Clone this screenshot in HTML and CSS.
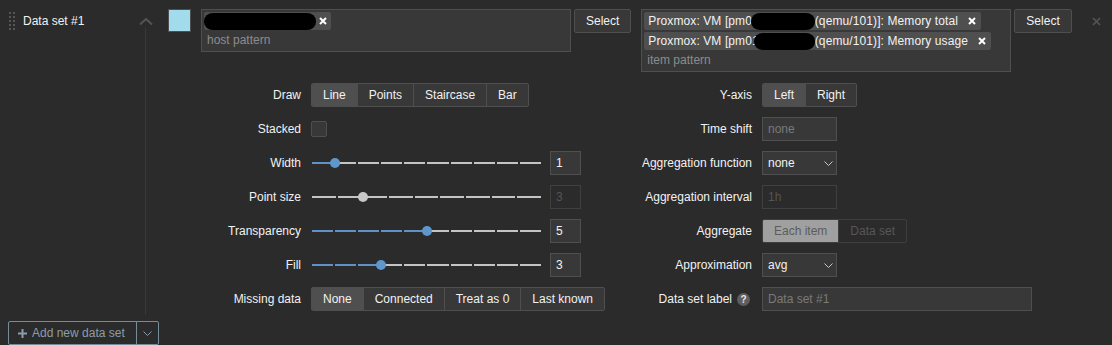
FILE: index.html
```html
<!DOCTYPE html>
<html>
<head>
<meta charset="utf-8">
<link rel="stylesheet" href="styles.css">
</head>
<body>
<div class="ds">
  <div class="ds-head">
    <svg class="handle" width="6" height="18" viewBox="0 0 6 18">
      <g fill="#555">
        <rect x="0" y="0" width="2" height="2"/><rect x="4" y="0" width="2" height="2"/>
        <rect x="0" y="4" width="2" height="2"/><rect x="4" y="4" width="2" height="2"/>
        <rect x="0" y="8" width="2" height="2"/><rect x="4" y="8" width="2" height="2"/>
        <rect x="0" y="12" width="2" height="2"/><rect x="4" y="12" width="2" height="2"/>
        <rect x="0" y="16" width="2" height="2"/><rect x="4" y="16" width="2" height="2"/>
      </g>
    </svg>
    <span class="ds-title">Data set #1</span>
  </div>
  <div class="ds-toggle">
    <svg class="chev-up" width="14" height="8" viewBox="0 0 14 8"><path d="M1 7.5 L7 2 L13 7.5" fill="none" stroke="#555" stroke-width="2"/></svg>
    <span class="vline"></span>
  </div>
  <div class="ds-body">
    <div class="ds-top">
      <span class="swatch"></span>
      <div class="ms">
        <div class="chips">
          <span class="chip chip-host"><span class="redact redact-host"></span><svg class="chip-x" width="8" height="8" viewBox="0 0 8 8"><path d="M1 1 L7 7 M7 1 L1 7" stroke="#fff" stroke-width="2"/></svg></span>
        </div>
        <div class="ms-ph">host pattern</div>
      </div>
      <button class="btn">Select</button>
      <div class="ms">
        <div class="chips">
          <span class="chip"><span class="chip-t">Proxmox: VM [pm01</span><span class="redact redact-1"></span><span class="chip-t">(qemu/101)]: Memory total</span><svg class="chip-x" width="8" height="8" viewBox="0 0 8 8"><path d="M1 1 L7 7 M7 1 L1 7" stroke="#fff" stroke-width="2"/></svg></span>
          <span class="chip"><span class="chip-t">Proxmox: VM [pm01</span><span class="redact redact-2"></span><span class="chip-t">(qemu/101)]: Memory usage</span><svg class="chip-x" width="8" height="8" viewBox="0 0 8 8"><path d="M1 1 L7 7 M7 1 L1 7" stroke="#fff" stroke-width="2"/></svg></span>
        </div>
        <div class="ms-ph">item pattern</div>
      </div>
      <button class="btn">Select</button>
    </div>

    <div class="ds-form">
      <div class="lbl">Draw</div>
      <div class="ctl">
        <div class="seg">
          <span class="seg-i on">Line</span><span class="seg-i">Points</span><span class="seg-i">Staircase</span><span class="seg-i">Bar</span>
        </div>
      </div>
      <div class="lbl">Y-axis</div>
      <div class="ctl">
        <div class="seg">
          <span class="seg-i on">Left</span><span class="seg-i">Right</span>
        </div>
      </div>

      <div class="lbl">Stacked</div>
      <div class="ctl"><span class="checkbox"></span></div>
      <div class="lbl">Time shift</div>
      <div class="ctl"><input class="inp inp-sm" type="text" placeholder="none"></div>

      <div class="lbl">Width</div>
      <div class="ctl slider-row">
        <div class="slider">
          <div class="track">
            <span class="tk on"></span><span class="tk"></span><span class="tk"></span><span class="tk"></span><span class="tk"></span><span class="tk"></span><span class="tk"></span><span class="tk"></span><span class="tk"></span><span class="tk"></span>
          </div>
          <span class="thumb" style="left:10%"></span>
        </div>
        <input class="inp inp-num" type="text" value="1">
      </div>
      <div class="lbl">Aggregation function</div>
      <div class="ctl">
        <div class="select"><span>none</span><svg width="9" height="5" viewBox="0 0 9 5"><path d="M0.5 0.5 L4.5 4.5 L8.5 0.5" fill="none" stroke="#c8c8c8" stroke-width="1"/></svg></div>
      </div>

      <div class="lbl">Point size</div>
      <div class="ctl slider-row">
        <div class="slider disabled">
          <div class="track">
            <span class="tk"></span><span class="tk"></span><span class="tk"></span><span class="tk"></span><span class="tk"></span><span class="tk"></span><span class="tk"></span><span class="tk"></span><span class="tk"></span>
          </div>
          <span class="thumb" style="left:22.22%"></span>
        </div>
        <input class="inp inp-num" type="text" value="3" disabled>
      </div>
      <div class="lbl">Aggregation interval</div>
      <div class="ctl"><input class="inp inp-sm" type="text" value="1h" disabled></div>

      <div class="lbl">Transparency</div>
      <div class="ctl slider-row">
        <div class="slider">
          <div class="track">
            <span class="tk on"></span><span class="tk on"></span><span class="tk on"></span><span class="tk on"></span><span class="tk on"></span><span class="tk"></span><span class="tk"></span><span class="tk"></span><span class="tk"></span><span class="tk"></span>
          </div>
          <span class="thumb" style="left:50%"></span>
        </div>
        <input class="inp inp-num" type="text" value="5">
      </div>
      <div class="lbl">Aggregate</div>
      <div class="ctl">
        <div class="seg seg-dis">
          <span class="seg-i on">Each item</span><span class="seg-i">Data set</span>
        </div>
      </div>

      <div class="lbl">Fill</div>
      <div class="ctl slider-row">
        <div class="slider">
          <div class="track">
            <span class="tk on"></span><span class="tk on"></span><span class="tk on"></span><span class="tk"></span><span class="tk"></span><span class="tk"></span><span class="tk"></span><span class="tk"></span><span class="tk"></span><span class="tk"></span>
          </div>
          <span class="thumb" style="left:30%"></span>
        </div>
        <input class="inp inp-num" type="text" value="3">
      </div>
      <div class="lbl">Approximation</div>
      <div class="ctl">
        <div class="select"><span>avg</span><svg width="9" height="5" viewBox="0 0 9 5"><path d="M0.5 0.5 L4.5 4.5 L8.5 0.5" fill="none" stroke="#c8c8c8" stroke-width="1"/></svg></div>
      </div>

      <div class="lbl">Missing data</div>
      <div class="ctl">
        <div class="seg">
          <span class="seg-i on">None</span><span class="seg-i">Connected</span><span class="seg-i">Treat as 0</span><span class="seg-i">Last known</span>
        </div>
      </div>
      <div class="lbl lbl-help">Data set label <span class="help">?</span></div>
      <div class="ctl"><input class="inp inp-wide" type="text" placeholder="Data set #1"></div>
    </div>
  </div>
  <button class="ds-remove" type="button">
    <svg width="9" height="9" viewBox="0 0 9 9"><path d="M1 1 L8 8 M8 1 L1 8" stroke="#555" stroke-width="1.6"/></svg>
  </button>
</div>

<div class="add-row">
  <button class="btn-alt add-main" type="button"><svg width="9" height="9" viewBox="0 0 9 9"><path d="M4.5 0 V9 M0 4.5 H9" stroke="#8a9ea9" stroke-width="2"/></svg><span>Add new data set</span></button><button class="btn-alt add-menu" type="button"><svg width="9" height="5" viewBox="0 0 9 5"><path d="M0.5 0.5 L4.5 4.5 L8.5 0.5" fill="none" stroke="#8a9ea9" stroke-width="1"/></svg></button>
</div>
</body>
</html>
```

FILE: styles.css
```css
* { box-sizing: border-box; }
html, body { margin: 0; padding: 0; }
body {
  background: #2b2b2b;
  color: #f2f2f2;
  font-family: "Liberation Sans", Arial, sans-serif;
  font-size: 12px;
  width: 1112px;
  height: 345px;
  overflow: hidden;
}
button, input { font-family: inherit; font-size: 12px; }

.ds {
  display: flex;
  padding-top: 9px;
}
.ds-head {
  width: 138px;
  height: 24px;
  flex: none;
  display: flex;
  align-items: center;
  gap: 8px;
  padding-left: 9px;
}
.handle { flex: none; }
.ds-title { line-height: 24px; }

.ds-toggle {
  width: 15px;
  flex: none;
  display: flex;
  flex-direction: column;
  align-items: center;
}
.chev-up { margin-top: 8px; flex: none; }
.vline {
  flex: 1;
  width: 1px;
  margin-top: 3px;
  background: #383838;
}

.ds-body {
  margin-left: 15px;
  margin-bottom: 4px;
}
.ds-top {
  display: flex;
  align-items: flex-start;
}
.swatch {
  width: 23px;
  height: 23px;
  background: #a2dcec;
  border: 1px solid #4f4f4f;
  margin-right: 10px;
  flex: none;
}
.ms {
  width: 370px;
  background: #383838;
  border: 1px solid #4f4f4f;
  padding: 2px 2px 0 2px;
  flex: none;
}
.chips {
  display: flex;
  flex-direction: column;
  align-items: flex-start;
  gap: 2px;
}
.chip {
  display: inline-flex;
  align-items: center;
  height: 18px;
  background: #4f4f4f;
  border-radius: 2px;
  padding: 0 5px 0 4px;
  color: #f2f2f2;
  white-space: nowrap;
}
.chip-t { letter-spacing: 0.1px; }
.chip-host { padding-left: 0; padding-right: 4px; }
.chip-x { margin-left: 10px; flex: none; }
.chip-host .chip-x { margin-left: 3px; }
.redact {
  display: inline-block;
  height: 17px;
  background: #000;
  border-radius: 9px / 8px;
  flex: none;
}
.redact-host { width: 112px; }
.redact-1 { width: 64px; margin-left: -8px; }
.redact-2 { width: 61px; margin-left: -5px; }
.ms-ph {
  height: 21px;
  line-height: 21px;
  padding-left: 3px;
  color: #8c8c8c;
}

.btn {
  height: 24px;
  padding: 0 11px;
  background: #383838;
  border: 1px solid #4f4f4f;
  border-radius: 2px;
  color: #f2f2f2;
  margin: 0 10px 0 3px;
  flex: none;
  cursor: pointer;
}

.ds-form {
  margin-top: 11px;
  display: grid;
  grid-template-columns: 133px 299px 132px auto;
  grid-auto-rows: 24px;
  column-gap: 10px;
  row-gap: 10px;
}
.lbl {
  text-align: right;
  line-height: 24px;
  white-space: nowrap;
}
.lbl-help {
  display: flex;
  justify-content: flex-end;
  align-items: center;
  gap: 5px;
  padding-right: 2px;
}
.help {
  width: 13px;
  height: 13px;
  border-radius: 50%;
  background: #5e5e5e;
  color: #e6e6e6;
  font-size: 10px;
  font-weight: bold;
  line-height: 13px;
  text-align: center;
}
.ctl {
  display: flex;
  align-items: center;
}

.seg {
  display: inline-flex;
  height: 24px;
  border: 1px solid #4f4f4f;
  border-radius: 2px;
  overflow: hidden;
}
.seg-i {
  padding: 0 11px;
  line-height: 22px;
  background: #383838;
  color: #f2f2f2;
  border-left: 1px solid #4f4f4f;
  white-space: nowrap;
}
.seg-i:first-child { border-left: none; }
.seg-i.on { background: #4f4f4f; }
.seg-dis { border-color: #3e3e3e; }
.seg-dis .seg-i { background: transparent; color: #575757; border-left-color: #3e3e3e; }
.seg-dis .seg-i.on { background: #a0a0a0; color: #5c5c5c; }

.checkbox {
  width: 16px;
  height: 16px;
  background: #383838;
  border: 1px solid #4f4f4f;
  border-radius: 2px;
}

.inp {
  height: 24px;
  background: #383838;
  border: 1px solid #4f4f4f;
  color: #f2f2f2;
  padding: 0 5px;
  outline: none;
  border-radius: 0;
}
.inp::placeholder { color: #7a7a7a; }
.inp:disabled { background: #2b2b2b; border-color: #404040; color: #555; }
.inp-sm { width: 75px; }
.inp-num { width: 31px; margin-left: 9px; }
.inp-wide { width: 270px; }

.slider {
  position: relative;
  width: 229px;
  height: 24px;
  margin-left: 1px;
  display: flex;
  align-items: center;
}
.track {
  width: 100%;
  height: 2px;
  display: flex;
  gap: 2px;
}
.tk { flex: 1; background: #c4c4c4; }
.tk.on { background: #5f93c8; }
.thumb {
  position: absolute;
  top: 7px;
  width: 10px;
  height: 10px;
  margin-left: -5px;
  border-radius: 50%;
  background: #5f97cc;
}
.slider.disabled .thumb { background: #c8c8c8; }

.select {
  width: 75px;
  height: 24px;
  background: #383838;
  border: 1px solid #4f4f4f;
  display: flex;
  align-items: center;
  justify-content: space-between;
  padding: 0 3px 0 5px;
}

.ds-remove {
  margin: 4px 7px 0 auto;
  width: 17px;
  height: 17px;
  padding: 0;
  border: none;
  background: transparent;
  display: flex;
  align-items: center;
  justify-content: center;
  align-self: flex-start;
}

.add-row {
  display: flex;
  margin-top: 6px;
  padding-left: 8px;
}
.btn-alt {
  height: 24px;
  background: transparent;
  border: 1px solid #768d99;
  color: #8a9ea9;
  display: inline-flex;
  align-items: center;
  border-radius: 2px;
  cursor: pointer;
}
.add-main {
  padding: 0 11px 0 9px;
  gap: 5px;
  border-radius: 2px 0 0 2px;
}
.add-menu {
  width: 23px;
  margin-left: -1px;
  justify-content: center;
  padding: 0;
  border-radius: 0 2px 2px 0;
}
```
